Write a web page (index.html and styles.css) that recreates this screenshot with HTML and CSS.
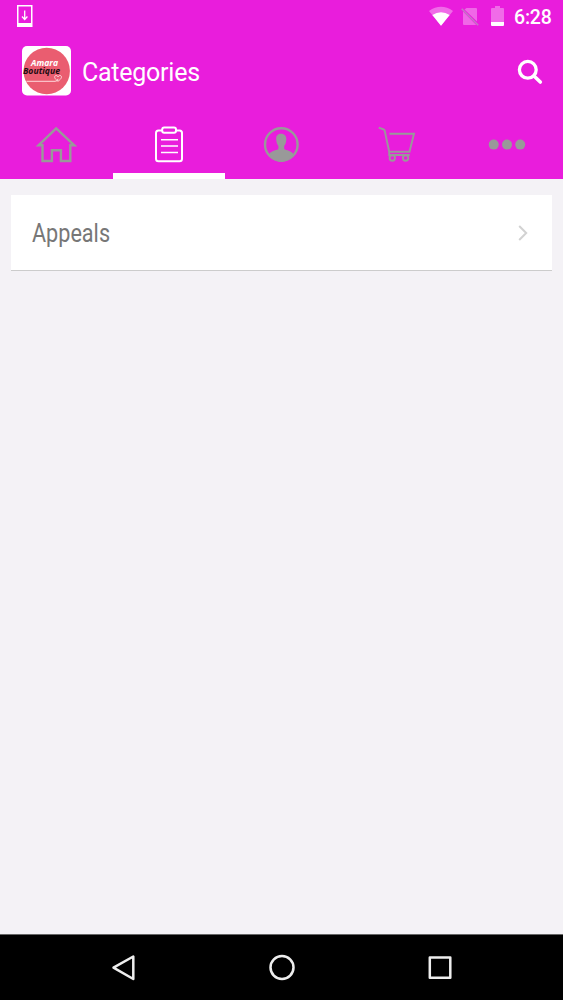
FILE: index.html
```
<!DOCTYPE html>
<html lang="en">
<head>
  <meta charset="UTF-8">
  <meta name="viewport" content="width=device-width, initial-scale=1.0">
  <title>Categories</title>
  <link rel="stylesheet" href="styles.css">
</head>
<body>

  <header class="header">
    <div class="status-bar">
      <svg class="download" width="16" height="22" viewBox="0 0 16 22">
        <path d="M0 0h15.500v22H0zM1.500 1.500v16.500h12.500V1.500z" fill="#fff" fill-rule="evenodd"/>
        <path d="M7.700 5.500v9M5 11.500l2.700 3 2.700-3" fill="none" stroke="#fff" stroke-width="1.300"/>
      </svg>
      <div class="status-icons">
        <svg width="24" height="20" viewBox="0 0 24 20">
          <path d="M0 5Q12-3.300 24 5L12 19.700z" fill="#fff" opacity=".35"/>
          <path d="M3.300 9Q12 3.500 20.700 9L12 19.700z" fill="#fff"/>
        </svg>
        <svg class="sim" width="18" height="20" viewBox="0 0 18 20">
          <path d="M5.500 2h9.500q1 0 1 1v12.500L3.500 3.500zM2 5.500l13.200 13.500H3q-1 0-1-1z" fill="#fff" opacity=".33"/>
          <path d="M.7 2.700l16.500 16.500" stroke="#c27bc4" stroke-width="1.500"/>
        </svg>
        <svg class="battery" width="13" height="20" viewBox="0 0 13 20">
          <path d="M4 0h5v2h3q1 0 1 1v13H0V3q0-1 1-1h3z" fill="#fff" opacity=".35"/>
          <path d="M0 16h13v3q0 1-1 1H1q-1 0-1-1z" fill="#fff"/>
        </svg>
        <span class="time">6:28</span>
      </div>
    </div>

    <div class="title-bar">
      <svg class="logo" width="49" height="50" viewBox="0 0 49 50">
        <rect width="49" height="49.500" rx="5" fill="#fff"/>
        <circle cx="24.700" cy="25" r="23.200" fill="#ea5d70"/>
        <text class="logo-name" x="9" y="19.500" textLength="27" lengthAdjust="spacingAndGlyphs" fill="#fff">Amara</text>
        <text class="logo-name" x="1" y="27.700" textLength="37" lengthAdjust="spacingAndGlyphs" fill="#1d0c10">Boutique</text>
        <path d="M4.500 35.300h28.500q3 0 3-2.500M36 35.300c-7-5-1-7.500 0-4.500 1.500-3 7-.5 0 4.500z" fill="none" stroke="#ffd9dd" stroke-width="1"/>
      </svg>
      <h1 class="title">Categories</h1>
      <svg class="search" width="26" height="26" viewBox="0 0 26 26">
        <circle cx="10.800" cy="10.800" r="8.400" fill="none" stroke="#fff" stroke-width="3.300"/>
        <path d="M17 17l6.300 6" stroke="#fff" stroke-width="3.600" stroke-linecap="round"/>
      </svg>
    </div>

    <nav class="tabs">
      <a class="tab">
        <svg width="40" height="38" viewBox="0 0 40 38">
          <path d="M20.200 2.300L2.500 19.300H6.500V35h9.400V24.200h9V35h9.400V19.300h4z"/>
        </svg>
      </a>
      <a class="tab active">
        <svg width="40" height="38" viewBox="0 0 40 38">
          <path d="M13 4.500H9.500q-2.500 0-2.500 2.500v25.800q0 2.500 2.500 2.500h21q2.500 0 2.500-2.500V7q0-2.500-2.500-2.500H27"/>
          <rect x="13.200" y="1.500" width="13.800" height="5.200" rx="2"/>
          <path d="M12 13.800h17M12 20h17M12 26.500h17" stroke-width="1.600"/>
        </svg>
      </a>
      <a class="tab">
        <svg width="40" height="38" viewBox="0 0 40 38">
          <circle cx="20.300" cy="18.500" r="16.300"/>
          <path class="solid" d="M20 7.800c-3.800 0-5 2.500-4.800 5.700.1 3 1 5 2.200 6.500v2.500c0 2-7.500 1.500-9.400 6 3 4.500 7.500 7.300 12.300 7.300s9.300-2.800 12.300-7.300c-1.900-4.500-9.400-4-9.400-6V20c1.200-1.500 2-3.500 2.100-6.500.2-3.200-1.500-5.700-5.300-5.700z"/>
        </svg>
      </a>
      <a class="tab">
        <svg class="cart" width="40" height="38" viewBox="0 0 40 38">
          <path d="M4.700 1.700l5 1.800q.8.300 1 1.200l4.500 21h20.300L40 7.700H15.500M15.200 25.700v3.300h20.500"/>
          <circle cx="18.300" cy="32" r="2.700"/>
          <circle cx="31.600" cy="32" r="2.700"/>
        </svg>
      </a>
      <a class="tab">
        <svg width="40" height="38" viewBox="0 0 40 38">
          <g class="solid">
            <circle cx="6.700" cy="18.600" r="5"/>
            <circle cx="20" cy="18.600" r="5"/>
            <circle cx="33.200" cy="18.600" r="5"/>
          </g>
        </svg>
      </a>
    </nav>
  </header>

  <main class="content">
    <a class="category">
      <span class="category-name">Appeals</span>
      <svg width="10" height="16" viewBox="0 0 10 16">
        <path d="M1.200 1l7 7-7 7" fill="none" stroke="#d2d2d2" stroke-width="2"/>
      </svg>
    </a>
  </main>

  <footer class="nav-bar">
    <svg width="28" height="28" viewBox="0 0 28 28">
      <path d="M24.300 2.500v22.500L4.500 13.700z"/>
    </svg>
    <svg width="28" height="28" viewBox="0 0 28 28">
      <circle cx="14" cy="13.500" r="11.500"/>
    </svg>
    <svg width="28" height="28" viewBox="0 0 28 28">
      <rect x="3.800" y="3.500" width="20.500" height="20.300"/>
    </svg>
  </footer>

</body>
</html>
```
FILE: styles.css
```
* {
  box-sizing: border-box;
}

body {
  margin: 0;
  height: 100vh;
  display: flex;
  flex-direction: column;
  font-family: Roboto, 'Liberation Sans', sans-serif;
  background: #f4f2f6;
}

svg {
  display: block;
  flex-shrink: 0;
}

.header {
  height: 179px;
  background: #e91ddc;
  color: #fff;
}

.status-bar {
  height: 34px;
  padding: 5px 11px 0 17px;
  display: flex;
  justify-content: space-between;
}

.status-icons {
  display: flex;
  padding-top: 1px;
}

.sim {
  margin-left: 8px;
}

.battery {
  margin-left: 12px;
}

.time {
  margin-left: 10px;
  width: 38px;
  font-size: 19.5px;
  font-weight: 500;
  line-height: 23px;
  letter-spacing: -0.2px;
  white-space: nowrap;
}

.title-bar {
  height: 76px;
  padding: 0 20px 0 22px;
  display: flex;
  align-items: center;
}

.logo {
  margin-top: -2px;
  overflow: visible;
}

.logo-name {
  font: italic bold 9.5px 'Open Sans', sans-serif;
}

.title {
  margin: 1px auto 0 11px;
  font-size: 25px;
  font-weight: 400;
  letter-spacing: -0.25px;
}

.tabs {
  height: 69px;
  display: grid;
  grid-template-columns: repeat(5, 1fr);
}

.tab {
  display: flex;
  justify-content: center;
  padding-top: 16px;
  border-bottom: 6px solid transparent;
  fill: none;
  stroke: #999;
  stroke-width: 2.4;
}

.tab svg {
  overflow: visible;
}

.tab .solid {
  fill: #999;
  stroke: none;
}

.tab.active {
  border-bottom-color: #fff;
  stroke: #fff;
  stroke-width: 2;
}

.cart {
  stroke-width: 1.9;
}

.content {
  flex: 1;
  padding: 16px 11px;
}

.category {
  height: 76px;
  padding: 0 24px 0 21px;
  display: flex;
  align-items: center;
  justify-content: space-between;
  background: #fff;
  border-bottom: 1px solid #ccc;
  color: #777;
}

.category-name {
  font-size: 25px;
  line-height: 30px;
  margin-top: 3px;
  transform: scaleX(0.865);
  transform-origin: left;
}

.nav-bar {
  height: 66px;
  padding: 0 109px;
  display: flex;
  align-items: center;
  justify-content: space-between;
  background: #000;
  border-top: 1px solid #666;
  fill: none;
  stroke: #eee;
  stroke-width: 2.5;
  stroke-linejoin: round;
}
```
